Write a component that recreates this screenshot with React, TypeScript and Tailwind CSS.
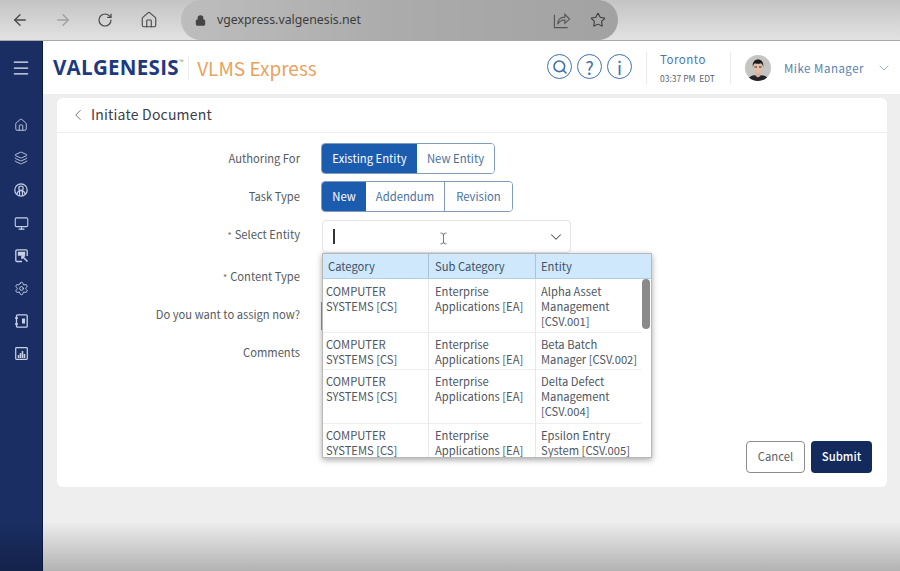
import React from "react";
import { ArrowLeft, ArrowRight, RotateCw, Home, Lock, Star, ChevronLeft, ChevronDown, Search, Menu, Layers, Monitor, Settings, TextCursor } from "lucide-react";

const ShareIcon = () => (
  <svg width="18" height="18" viewBox="0 0 19 19" fill="none" stroke="#555" strokeWidth="1.2">
    <path d="M1.500 4v13.500h14" />
    <path d="M5 14c0-5 3-7.500 7.500-7.500V3.500l5 5-5 4.500v-3.500c-3.500 0-6 1.500-7.500 4.500z" />
  </svg>
);

const UserRing = () => (
  <svg width="14" height="14" viewBox="0 0 14 14" fill="none" stroke="#c8d2e6" strokeWidth="1.2">
    <circle cx="7" cy="7" r="6.200" />
    <circle cx="7" cy="5.200" r="2.200" />
    <path d="M2.800 11.500c.5-2.600 2-3.800 4.200-3.800s3.700 1.200 4.200 3.800M5.500 8v5M8.500 8v5" />
  </svg>
);

const CursorScreen = () => (
  <svg width="13" height="14" viewBox="0 0 13 14" fill="none" stroke="#c8d2e6" strokeWidth="1.300">
    <path d="M7 12.500H2a1.200 1.200 0 0 1-1.200-1.200V2A1.200 1.200 0 0 1 2 .8h9A1.200 1.200 0 0 1 12.200 2v5" />
    <path d="M3.500 3.500h6v2.500h-6z" fill="#c8d2e6" />
    <path d="M7 7l5.500 5.500M7 7h3M7 7v3" strokeWidth="1.500" />
  </svg>
);

const Book = () => (
  <svg width="13" height="14" viewBox="0 0 13 14" fill="none" stroke="#c8d2e6" strokeWidth="1.300">
    <rect x="1.500" y="0.800" width="10.700" height="12.400" rx="1" />
    <path d="M0 4h3M0 10h3" />
    <rect x="7" y="4.500" width="3" height="5" fill="#c8d2e6" stroke="none" />
  </svg>
);

const ChartBox = () => (
  <svg width="13" height="13" viewBox="0 0 13 13" fill="none" stroke="#c8d2e6" strokeWidth="1.200">
    <rect x="0.700" y="0.700" width="11.600" height="11.600" rx="0.800" />
    <path d="M3.500 11V8M5.500 11V6M7.500 11V4M9.500 11V7" strokeWidth="1.500" />
  </svg>
);

const Avatar = () => (
  <svg width="26" height="26" viewBox="0 0 26 26" className="rounded-full">
    <rect width="26" height="26" fill="#c4c4c2" />
    <path d="M2 26c1-5 6-6 11-6s10 1 11 6z" fill="#232327" />
    <path d="M10.500 16h5v5l-2.500 1.500-2.500-1.500z" fill="#d8b09a" />
    <ellipse cx="13" cy="12" rx="4.700" ry="6" fill="#e2bca6" />
    <path d="M7.800 12c-.6-5 1.800-7.500 5.200-7.500s5.800 2.500 5.200 7.500c-.5-2.300-1.200-3.300-2.200-3.800-2 .7-4.500.7-6 0-1 .6-1.700 1.600-2.200 3.800z" fill="#1c1a1a" />
    <path d="M9.500 12h2.500M14 12h2.500" stroke="#2a2a2a" strokeWidth="1.100" />
  </svg>
);

const sideIcons = [
  <Home size={14} strokeWidth={1.5} />,
  <Layers size={14} strokeWidth={1.5} />,
  <UserRing />,
  <Monitor size={15} strokeWidth={1.7} />,
  <CursorScreen />,
  <Settings size={15} strokeWidth={1.5} />,
  <Book />,
  <ChartBox />,
];

const rows = [
  { entity: ["Alpha Asset", "Management", "[CSV.001]"], h: "h-[54px]", pt: "pt-[5px]" },
  { entity: ["Beta Batch", "Manager [CSV.002]"], h: "h-[37px]", pt: "pt-[4px]" },
  { entity: ["Delta Defect", "Management", "[CSV.004]"], h: "h-[54px]", pt: "pt-[4px]" },
  { entity: ["Epsilon Entry", "System [CSV.005]"], h: "h-[54px]", pt: "pt-[4px]" },
];

const Label = ({ children, req, className }: { children: React.ReactNode; req?: boolean; className?: string }) => (
  <div className={`w-[243px] text-right text-[11.200px] leading-[15px] text-[#555a62] shrink-0 ${className ?? ""}`}>
    {req && <span className="text-[#8a6a6a] text-[9px] mr-[3px]">*</span>}
    {children}
  </div>
);

export default function App() {
  return (
    <div className="font-['Noto_Sans_CJK_SC','Noto_Sans',sans-serif] relative w-[900px] h-[571px] overflow-hidden flex flex-col bg-[#eeeeee]">
      {/* browser bar */}
      <div className="h-[41px] shrink-0 flex items-center bg-gradient-to-b from-[#c4c4c4] to-[#e2e2e2] border-b border-[#a8a8a8] pl-[11px]">
        <ArrowLeft size={18} strokeWidth={1.8} className="text-[#4a4a4a]" />
        <ArrowRight size={18} strokeWidth={1.8} className="text-[#a0a0a0] ml-[25px]" />
        <RotateCw size={16} strokeWidth={1.8} className="text-[#4a4a4a] ml-[25px]" />
        <Home size={18} strokeWidth={1.5} className="text-[#4a4a4a] ml-[27px]" />
        <div className="ml-[23px] w-[437px] h-[40px] rounded-[24px] bg-gradient-to-r from-[#bdbdbd] via-[#ababab] to-[#a2a2a2] flex items-center pl-[14px] pr-[12px]">
          <Lock size={11} strokeWidth={2.5} className="text-[#444]" fill="#444" />
          <span className="ml-[11px] font-['Noto_Sans',sans-serif] text-[12.300px] text-[#3c3c3c]">vgexpress.valgenesis.net</span>
          <div className="ml-auto flex items-center gap-[19px]">
            <ShareIcon />
            <Star size={16} strokeWidth={1.6} className="text-[#3c3c3c]" />
          </div>
        </div>
      </div>

      <div className="flex-1 flex min-h-0">
        {/* sidebar */}
        <div className="w-[43px] shrink-0 bg-[#1a2e63] border-r border-[#0e1c42] flex flex-col items-center">
          <Menu size={20} strokeWidth={1.5} className="text-[#e8ecf4] mt-[17px]" />
          <div className="mt-[31px] flex flex-col items-center">
            {sideIcons.map((icon, i) => (
              <div key={i} className="h-[32.600px] flex items-center justify-center text-[#c8d2e6]">
                {icon}
              </div>
            ))}
          </div>
        </div>

        <div className="flex-1 flex flex-col min-w-0">
          {/* header */}
          <div className="h-[53px] shrink-0 bg-white flex items-center pl-[10px]">
            <span className="font-['Open_Sans',sans-serif] font-bold text-[20.500px] leading-none tracking-[0.3px] text-[#1d3a80]">VALGENESIS</span>
            <span className="text-[6px] leading-none text-[#777] self-start mt-[18px]">™</span>
            <div className="ml-[5px] h-[24px] w-px bg-[#ececec]" />
            <span className="ml-[8px] text-[19px] leading-[24px] text-[#e8a25d]">VLMS Express</span>
            <div className="ml-auto flex items-center text-[#3e70ad]">
              <div className="w-[25px] h-[25px] -mt-[2px] rounded-full border-[1.500px] border-[#3e70ad] flex items-center justify-center">
                <Search size={16} strokeWidth={2.4} />
              </div>
              <div className="ml-[5px] w-[25px] h-[25px] -mt-[2px] rounded-full border-[1.500px] border-[#3e70ad] flex items-center justify-center text-[18px] leading-none">?</div>
              <div className="ml-[5px] w-[25px] h-[25px] -mt-[2px] rounded-full border-[1.500px] border-[#3e70ad] flex items-center justify-center text-[18px] leading-none">i</div>
              <div className="ml-[14px] h-[32px] w-px bg-[#eaeaea]" />
              <div className="ml-[13px] w-[70px]">
                <div className="text-[11.500px] tracking-[0.5px] leading-[16px] text-[#4b76aa]">Toronto</div>
                <div className="text-[8.500px] text-[#5e6470] leading-[14px] mt-[4px] whitespace-nowrap">03:37 PM&nbsp; EDT</div>
              </div>
              <div className="h-[32px] w-px bg-[#eaeaea]" />
              <div className="ml-[14px] h-[26px]"><Avatar /></div>
              <span className="ml-[13px] w-[80px] whitespace-nowrap text-[11.500px] leading-[16px] mt-[1px] tracking-[0.5px] text-[#5b81ad]">Mike Manager</span>
              <ChevronDown size={16} strokeWidth={1.2} className="ml-[12px] mr-[8px] text-[#7d9bbd]" />
            </div>
          </div>

          {/* content */}
          <div className="flex-1 pt-[4px] pl-[14px] pr-[13px]">
            <div className="h-[389px] bg-white rounded-[6px] flex flex-col">
              <div className="h-[35px] shrink-0 border-b border-[#eeeeee] flex items-center pl-[12px]">
                <ChevronLeft size={18} strokeWidth={1.2} className="text-[#666]" />
                <span className="ml-[4px] mb-[2px] text-[14px] leading-[20px] tracking-[0.2px] text-[#3c4048]">Initiate Document</span>
              </div>

              <div className="relative flex-1 flex flex-col">
                <div className="flex items-center h-[31px] mt-[10px]">
                  <Label>Authoring For</Label>
                  <div className="ml-[21px] flex h-[31px] rounded-[4px] border border-[#7f9cbd] overflow-hidden text-[11.300px]">
                    <div className="w-[95px] bg-[#1b5cae] text-white flex items-center justify-center">Existing Entity</div>
                    <div className="w-[77px] bg-white text-[#47729f] flex items-center justify-center">New Entity</div>
                  </div>
                </div>
                <div className="flex items-center h-[31px] mt-[7px]">
                  <Label>Task Type</Label>
                  <div className="ml-[21px] flex h-[31px] rounded-[4px] border border-[#7f9cbd] overflow-hidden text-[11.300px]">
                    <div className="w-[44px] bg-[#1b5cae] text-white flex items-center justify-center">New</div>
                    <div className="w-[79px] bg-white text-[#47729f] flex items-center justify-center border-r border-[#7f9cbd]">Addendum</div>
                    <div className="w-[67px] bg-white text-[#47729f] flex items-center justify-center">Revision</div>
                  </div>
                </div>
                <div className="flex items-center h-[33px] mt-[8px]">
                  <Label req className="mb-[4px]">Select Entity</Label>
                  <div className="relative ml-[22px] w-[249px] h-[33px] border border-[#e4e4e4] rounded-[4px] flex items-center pl-[10px] pr-[5px]">
                    <div className="w-[2px] h-[15px] bg-[#333]" />
                    <TextCursor size={13} strokeWidth={1.4} className="text-[#555] ml-[102px] mt-[4px]" />
                    <ChevronDown size={18} strokeWidth={1.4} className="ml-auto text-[#555]" />
                    {/* dropdown */}
                    <div className="absolute left-[-1px] top-[32px] w-[330px] h-[205px] z-10 bg-white border border-[#b8b8b8] shadow-[0_2px_6px_rgba(0,0,0,0.35)] overflow-hidden text-[11.200px] text-[#4f5560] leading-[15px]">
                      <div className="h-[25px] flex items-center bg-[#cfe8fb] border-b border-[#b0cfe6] text-[#3f5266]">
                        <div className="w-[106px] shrink-0 h-full flex items-center pl-[5px] border-r border-[#a9c4da]">Category</div>
                        <div className="w-[107px] shrink-0 h-full flex items-center pl-[6px] border-r border-[#a9c4da]">Sub Category</div>
                        <div className="flex-1 pl-[5px]">Entity</div>
                      </div>
                      <div className="relative">
                        {rows.map((r, i) => (
                          <div key={i} className={`${r.h} ${r.pt} flex border-b border-[#eeeeee] mr-[10px]`}>
                            <div className="w-[106px] shrink-0 pl-[3px] border-r border-[#e8e8e8] -mt-[5px] pt-[5px]">COMPUTER<br />SYSTEMS [CS]</div>
                            <div className="w-[107px] shrink-0 pl-[6px] border-r border-[#e8e8e8] -mt-[5px] pt-[5px]">Enterprise<br />Applications [EA]</div>
                            <div className="flex-1 pl-[5px] whitespace-nowrap">
                              {r.entity.map((t) => (<div key={t}>{t}</div>))}
                            </div>
                          </div>
                        ))}
                        <div className="absolute right-[1px] top-0 w-[8px] h-[50px] rounded-[4px] bg-[#8a8a8a]" />
                      </div>
                    </div>
                  </div>
                </div>
                <div className="flex items-center h-[32px] mt-[9px]">
                  <Label req className="mb-[2px]">Content Type</Label>
                </div>
                <div className="flex items-center h-[32px] mt-[6px]">
                  <Label className="mb-[4px]">Do you want to assign now?</Label>
                  <div className="ml-[21px] w-[2px] h-[28px] bg-[#7f9cbd]" />
                </div>
                <div className="flex items-center h-[32px] mt-[6px]">
                  <Label className="mb-[4px]">Comments</Label>
                </div>

                <div className="mt-auto mb-[14px] mr-[15px] flex justify-end gap-[6px] text-[11.300px]">
                  <div className="w-[59px] h-[32px] pb-[1px] border border-[#8c8c8c] rounded-[4px] flex items-center justify-center text-[#5a5f68]">Cancel</div>
                  <div className="w-[61px] h-[32px] pb-[1px] bg-[#152a5c] rounded-[4px] flex items-center justify-center text-white font-medium">Submit</div>
                </div>
              </div>
            </div>
          </div>
        </div>
      </div>

      {/* video fade at the bottom edge */}
      <div className="absolute left-0 right-0 bottom-0 h-[50px] bg-gradient-to-b from-transparent to-[#00000040] pointer-events-none" />
    </div>
  );
}
